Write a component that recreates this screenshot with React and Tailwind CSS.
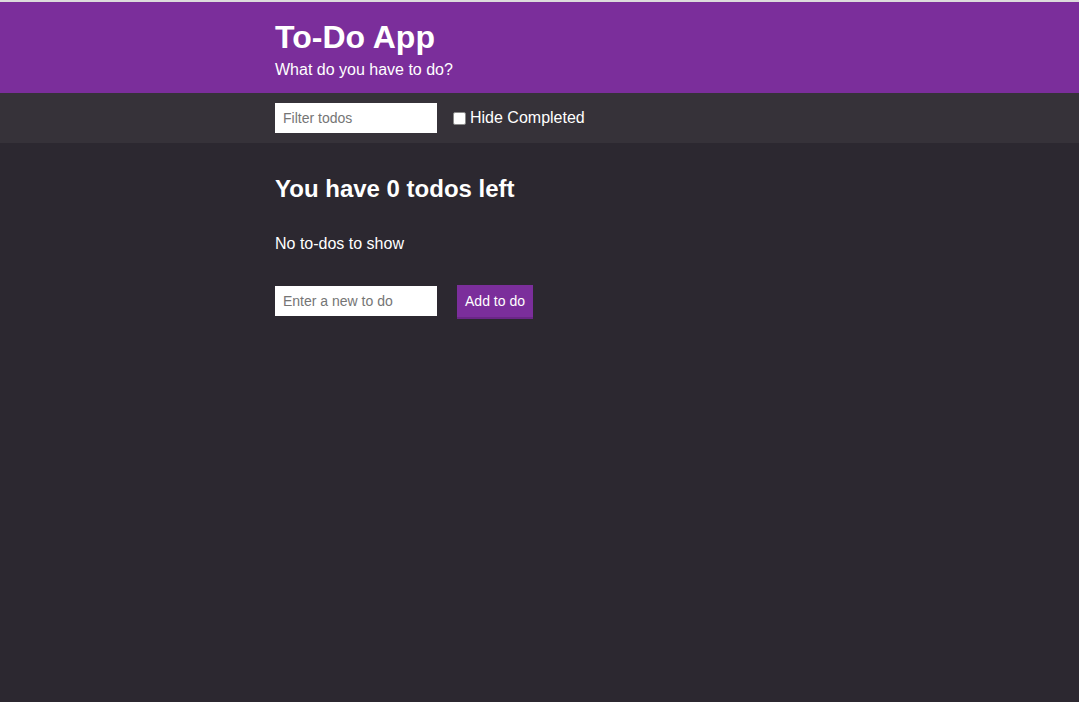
import { useState } from 'react';

export default function App() {
  const [hideCompleted, setHideCompleted] = useState(false);
  const [filter, setFilter] = useState('');
  const [text, setText] = useState('');

  return (
    <div className="min-h-[702px] flex flex-col bg-[#2c2830] text-white font-['Liberation_Sans',Arial,sans-serif]">
      <div className="h-[2px] bg-[#dcdcdc]" />

      <header className="bg-[#7b2e9b] h-[91px]">
        <div className="w-[529px] mx-auto pt-[15px]">
          <h1 className="text-[32px] font-bold leading-[40px]">To-Do App</h1>
          <p className="text-[16px] leading-[20px] mt-[3px]">What do you have to do?</p>
        </div>
      </header>

      <div className="bg-[#363239] h-[50px]">
        <div className="w-[529px] mx-auto flex items-center h-full gap-4">
          <input
            type="text"
            value={filter}
            onChange={(e) => setFilter(e.target.value)}
            placeholder="Filter todos"
            className="w-[162px] h-[30px] bg-white text-black text-[14px] px-2 placeholder:text-[#757575] outline-none"
          />
          <label className="flex items-center text-[16px]">
            <input
              type="checkbox"
              checked={hideCompleted}
              onChange={(e) => setHideCompleted(e.target.checked)}
              className="w-[13px] h-[13px] mr-[4px] appearance-none bg-white rounded-[2px] border border-[#8a8a8a]"
            />
            Hide Completed
          </label>
        </div>
      </div>

      <main className="flex-1">
        <div className="w-[529px] mx-auto pt-[32px]">
          <h2 className="text-[24px] font-bold leading-[28px]">You have 0 todos left</h2>
          <p className="text-[16px] leading-[20px] mt-[31px]">No to-dos to show</p>
          <form
            className="flex items-start gap-5 mt-[32px]"
            onSubmit={(e) => e.preventDefault()}
          >
            <input
              type="text"
              value={text}
              onChange={(e) => setText(e.target.value)}
              placeholder="Enter a new to do"
              className="w-[162px] h-[30px] bg-white text-black text-[14px] px-2 placeholder:text-[#757575] outline-none"
            />
            <button
              type="submit"
              className="w-[76px] h-[34px] -mt-[1px] bg-[#7b2e9b] border-b-2 border-[#6a2686] text-[14px] text-white pt-[1px]"
            >
              Add to do
            </button>
          </form>
        </div>
      </main>
    </div>
  );
}
